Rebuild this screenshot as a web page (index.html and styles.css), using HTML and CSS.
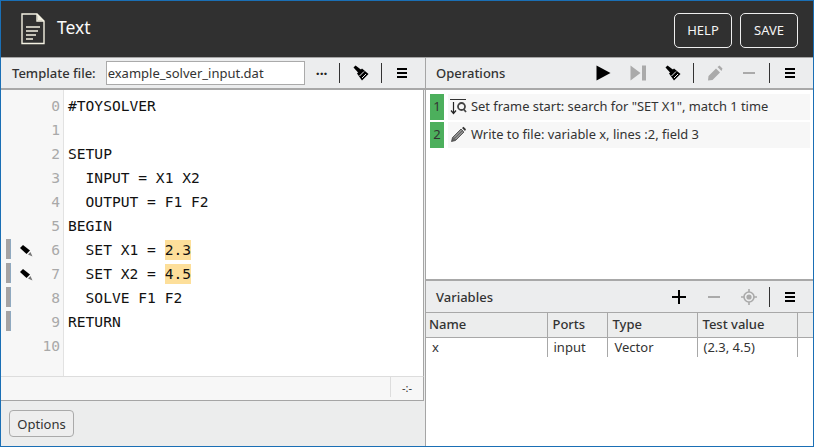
FILE: index.html
```html
<!DOCTYPE html>
<html lang="en">
<head>
<meta charset="utf-8">
<title>Text</title>
<link rel="stylesheet" href="styles.css">
</head>
<body>
<div class="app">
  <header class="top">
    <svg class="doc" width="24" height="32" viewBox="0 0 24 32"><path d="M1 1H16L23 8V30.500H1Z M16 1V8H23" fill="#303030" stroke="#f4f1e2" stroke-width="1.400"/><path d="M16.500 1.500L22.500 7.500H16.500Z" fill="#f4f1e2"/><path d="M5 14H19M5 18H17M5 22H15M5 26H12" stroke="#f4f1e2" stroke-width="1.400"/></svg>
    <span class="title">Text</span>
    <span class="spacer"></span>
    <button class="hbtn help">HELP</button>
    <button class="hbtn">SAVE</button>
  </header>
  <div class="main">
    <section class="left">
      <div class="bar leftbar">
        <label class="lbl">Template file:</label>
        <input class="file" value="example_solver_input.dat">
        <span class="dots">···</span>
        <i class="sep"></i>
        <svg class="ic brush" viewBox="0 0 16 16"><use href="#brush"/></svg>
        <i class="sep"></i>
        <svg class="ic menu" viewBox="0 0 12 12"><use href="#menu"/></svg>
      </div>
      <div class="editor">
        <div class="line"><span class="gut"><span class="mark"></span><span class="pin"></span><span class="num">0</span></span><span class="code">#TOYSOLVER</span></div>
        <div class="line"><span class="gut"><span class="mark"></span><span class="pin"></span><span class="num">1</span></span><span class="code"></span></div>
        <div class="line"><span class="gut"><span class="mark"></span><span class="pin"></span><span class="num">2</span></span><span class="code">SETUP</span></div>
        <div class="line"><span class="gut"><span class="mark"></span><span class="pin"></span><span class="num">3</span></span><span class="code">  INPUT = X1 X2</span></div>
        <div class="line"><span class="gut"><span class="mark"></span><span class="pin"></span><span class="num">4</span></span><span class="code">  OUTPUT = F1 F2</span></div>
        <div class="line"><span class="gut"><span class="mark"></span><span class="pin"></span><span class="num">5</span></span><span class="code">BEGIN</span></div>
        <div class="line"><span class="gut"><span class="mark on"></span><span class="pin"><svg class="pinic" width="13" height="12" viewBox="0 0 13 12"><path d="M0 3L3 0L10 5.500L6.500 9Z" fill="#000"/><path d="M8 9.500L10.500 7L12.500 11.500Z" fill="#777"/></svg></span><span class="num">6</span></span><span class="code">  SET X1 = <mark class="hl">2.3</mark></span></div>
        <div class="line"><span class="gut"><span class="mark on"></span><span class="pin"><svg class="pinic" width="13" height="12" viewBox="0 0 13 12"><path d="M0 3L3 0L10 5.500L6.500 9Z" fill="#000"/><path d="M8 9.500L10.500 7L12.500 11.500Z" fill="#777"/></svg></span><span class="num">7</span></span><span class="code">  SET X2 = <mark class="hl">4.5</mark></span></div>
        <div class="line"><span class="gut"><span class="mark on"></span><span class="pin"></span><span class="num">8</span></span><span class="code">  SOLVE F1 F2</span></div>
        <div class="line"><span class="gut"><span class="mark on"></span><span class="pin"></span><span class="num">9</span></span><span class="code">RETURN</span></div>
        <div class="line"><span class="gut"><span class="mark"></span><span class="pin"></span><span class="num">10</span></span><span class="code"></span></div>
        <div class="fill"><span class="gut"></span></div>
      </div>
      <div class="status"><span class="pos">-:-</span></div>
      <div class="foot"><button class="opt">Options</button></div>
    </section>
    <section class="right">
      <div class="ops">
        <div class="bar rbar">
          <span class="head">Operations</span>
          <span class="spacer"></span>
          <svg class="ic play" viewBox="0 0 15 16"><path d="M0.500 0.500L14.500 8L0.500 15.500Z" fill="#000"/></svg>
          <svg class="ic step" viewBox="0 0 16 16"><path d="M0.500 0.500L10.500 8L0.500 15.500Z M12 0.500H16V15.500H12Z" fill="#aaa"/></svg>
          <svg class="ic brush b2" viewBox="0 0 16 16"><use href="#brush"/></svg>
          <i class="sep"></i>
          <svg class="ic pen" viewBox="0 0 16 16"><path d="M1 15.500L1.500 11L9 3.500L13 7.500L5.500 15Z M10.500 2L12.500 0.500L15.500 3.500L14.500 6Z" fill="#aaa"/></svg>
          <svg class="ic minus om" viewBox="0 0 14 14"><path d="M1 6H13V8H1Z" fill="#aaa"/></svg>
          <i class="sep"></i>
          <svg class="ic menu" viewBox="0 0 12 12"><use href="#menu"/></svg>
        </div>
        <ul class="oplist">
          <li class="op"><span class="idx">1</span><span class="optext"><svg class="opic" width="17" height="17" viewBox="0 0 17 17"><path d="M0 1.500H16" stroke="#333" stroke-width="1"/><path d="M3.500 4V15M1 12.500L3.500 15.500L6 12.500" fill="none" stroke="#222" stroke-width="1.200"/><circle cx="11.500" cy="8.500" r="3.500" fill="none" stroke="#444" stroke-width="1.800"/><path d="M13.500 11L16 14" stroke="#444" stroke-width="1.800"/></svg>Set frame start: search for "SET X1", match 1 time</span></li>
          <li class="op"><span class="idx">2</span><span class="optext"><svg class="opic" width="17" height="17" viewBox="0 0 17 17"><path d="M1.500 15.500L2.500 11.500L11 3L14 6L5.500 14.500Z" fill="#666" stroke="#333" stroke-width=".7"/><path d="M4 11.500L11.500 4M5.500 13L13 5.500" stroke="#eee" stroke-width=".6"/><path d="M12 2L13.500 .8L16 3.300L15 5Z" fill="#333"/></svg>Write to file: variable x, lines :2, field 3</span></li>
        </ul>
      </div>
      <div class="vars">
        <div class="bar vbar">
          <span class="head">Variables</span>
          <span class="spacer"></span>
          <svg class="ic plus" viewBox="0 0 14 14"><path d="M6 0H8V6H14V8H8V14H6V8H0V6H6Z" fill="#000"/></svg>
          <svg class="ic minus vm" viewBox="0 0 14 14"><path d="M1 6H13V8H1Z" fill="#aaa"/></svg>
          <svg class="ic target" viewBox="0 0 16 16"><circle cx="8" cy="8" r="5" fill="none" stroke="#aaa" stroke-width="1.600"/><circle cx="8" cy="8" r="2.600" fill="#aaa"/><path d="M8 0V3M8 13V16M0 8H3M13 8H16" stroke="#aaa" stroke-width="1.600"/></svg>
          <i class="sep"></i>
          <svg class="ic menu" viewBox="0 0 12 12"><use href="#menu"/></svg>
        </div>
        <table class="tbl">
          <thead><tr><th class="c1">Name</th><th class="c2">Ports</th><th class="c3">Type</th><th class="c4">Test value</th><th class="c5"></th></tr></thead>
          <tbody><tr><td>x</td><td>input</td><td class="vtype">Vector</td><td class="vtest">(2.3, 4.5)</td><td class="c5"></td></tr></tbody>
        </table>
      </div>
    </section>
  </div>
</div>
<svg class="defs" width="0" height="0">
  <symbol id="brush" viewBox="0 0 16 16"><path d="M0.500 2.500L2.500 0.500L8.500 5L5.500 8Z" fill="#000"/><path d="M4 8.500L9 3.500L15.500 9L9 15.500Z" fill="#000"/><path d="M6.500 11L11 6.500M9 13L13 9" stroke="#ecedee" stroke-width="1"/></symbol>
  <symbol id="menu" viewBox="0 0 12 12"><path d="M1 1H11V3H1ZM1 5H11V7H1ZM1 9H11V11H1Z" fill="#000"/></symbol>
</svg>
</body>
</html>
```
FILE: styles.css
```css
* { box-sizing: border-box; }
html, body { margin: 0; height: 100%; }
body { font-family: "Noto Sans", "Open Sans", sans-serif; font-size: 13px; color: #333; overflow: hidden; }
.app { width: 814px; height: 447px; display: flex; flex-direction: column; border: 1px solid #1a6fb5; background: #eceded; }
.defs { position: absolute; }
.top { height: 56px; background: #303030; display: flex; align-items: center; padding: 0 15px 0 20px; flex: none; }
.doc { margin-right: 12px; }
.title { color: #fafafa; font-size: 17.500px; margin-top: -4px; }
.spacer { flex: 1; }
.hbtn { width: 58px; height: 35px; border: 1px solid #eee; border-radius: 5px; background: #303030; color: #f5f5f5; font: 13px "Noto Sans", sans-serif; padding: 0; margin-top: 2px; }
.help { margin-right: 8px; }
.main { flex: 1; display: flex; min-height: 0; }
.left { width: 425px; flex: none; display: flex; flex-direction: column; border-top: 1px solid #a5a5a5; border-right: 1px solid #a5a5a5; }
.bar { display: flex; align-items: center; background: #ecedee; height: 32px; flex: none; border-bottom: 2px solid #a8a8a8; }
.leftbar { padding-left: 11px; }
.lbl { font-weight: 500; color: #333; font-size: 13px; margin-right: 10px; }
.file { width: 199px; height: 24px; border: 1px solid #aaa; background: #fff; padding: 0 0 0 1px; font: 13px "Noto Sans", sans-serif; color: #333; }
.dots { width: 34px; text-align: center; font-weight: 700; color: #222; font-size: 14px; }
.sep { width: 1px; height: 20px; background: #333; flex: none; }
.ic { flex: none; display: block; }
.brush { width: 16px; height: 16px; margin: 0 12px 0 13px; }
.menu { width: 12px; height: 12px; margin: 0 14px; }
.left .menu { margin-right: 15px; }
.editor { flex: 1; display: flex; flex-direction: column; background: #fff; min-height: 0; margin-right: 1px; border-right: 1px solid #a5a5a5; }
.line { height: 24px; display: flex; flex: none; font: 14.600px/24px "DejaVu Sans Mono", monospace; color: #111; }
.line:first-child { height: 28px; line-height: 32px; }
.gut { width: 63px; flex: none; display: flex; background: #f7f7f7; border-right: 1px solid #e2e2e2; }
.fill { flex: 1; display: flex; }
.mark { width: 5px; margin-left: 5px; height: 20px; margin-top: 1px; flex: none; }
.mark.on { background: #a6a3a3; border-right: 1px solid #8fa9c0; }
.pin { width: 14px; margin-left: 9px; flex: none; display: flex; align-items: center; }
.pinic { flex: none; margin-top: 2px; }
.num { width: 29px; padding-right: 3px; text-align: right; color: #a9a9a9; flex: none; }
.code { white-space: pre; padding-left: 4px; }
.hl { background: #fddf9a; color: inherit; display: inline-block; height: 20px; line-height: 20px; }
.status { height: 25px; flex: none; border-top: 1px solid #ddd; border-bottom: 1px solid #a5a5a5; border-right: 1px solid #a5a5a5; margin-right: 1px; background: #f7f7f7; display: flex; justify-content: flex-end; }
.pos { width: 33px; border-left: 1px solid #ddd; text-align: center; font-size: 11px; line-height: 21px; height: 20px; color: #333; }
.foot { height: 45px; flex: none; padding: 9px 8px; background: #eceded; }
.opt { display: block; width: 65px; height: 27px; border: 1px solid #aaa; border-radius: 4px; background: #eee; color: #333; font: 13px "Noto Sans", sans-serif; padding: 0; }
.right { flex: 1; display: flex; flex-direction: column; min-width: 0; border-top: 1px solid #a5a5a5; }
.ops { height: 223px; flex: none; display: flex; flex-direction: column; background: #fff; border-bottom: 2px solid #a8a8a8; }
.rbar, .vbar { padding-left: 10px; }
.head { color: #333; font-weight: 500; font-size: 13px; }
.play { width: 15px; height: 16px; margin-right: 19px; }
.step { width: 16px; height: 16px; margin-right: 19px; }
.b2 { margin: 0 12px 0 0; }
.pen { width: 16px; height: 16px; margin: 0 19px 0 13px; }
.om { margin: 0 13px 0 0; }
.minus { width: 14px; height: 14px; }
.rbar .menu, .vbar .menu { margin: 0 17px 0 14px; }
.oplist { list-style: none; margin: 0; padding: 4px 3px 0 4px; }
.op { display: flex; height: 26px; margin-bottom: 2px; }
.idx { width: 14px; background: #4caf5c; color: #333; text-align: center; line-height: 25px; flex: none; }
.optext { flex: 1; margin-left: 4px; background: #f7f7f7; display: flex; align-items: center; font-size: 12.900px; white-space: pre; padding: 0 0 2px 2px; }
.opic { margin-right: 4px; flex: none; }
.vars { flex: 1; display: flex; flex-direction: column; background: #fff; min-height: 0; }
.vbar { height: 32px; border-bottom: 1px solid #a8a8a8; }
.plus { width: 14px; height: 14px; margin-right: 21px; }
.vm { margin-right: 20px; }
.target { width: 16px; height: 16px; margin-right: 12px; }
.tbl { border-collapse: collapse; table-layout: fixed; width: 387px; }
.tbl th { height: 24px; background: #eceded; font-weight: 500; text-align: left; padding: 0 0 2px 5px; border-right: 1px solid #a8a8a8; border-bottom: 1px solid #a8a8a8; font-size: 13px; }
.tbl .c1 { padding-left: 3px; }
.tbl td { height: 20px; padding: 0 0 0 6px; border-right: 1px solid #a8a8a8; font-size: 13px; }
.tbl .vtype { padding-left: 7px; }
.tbl .vtest { padding-left: 6px; }
.c1 { width: 121px; }
.c2 { width: 60px; }
.c3 { width: 90px; }
.c4 { width: 100px; }
.tbl .c5 { width: 16px; border-right: 0; }
```
